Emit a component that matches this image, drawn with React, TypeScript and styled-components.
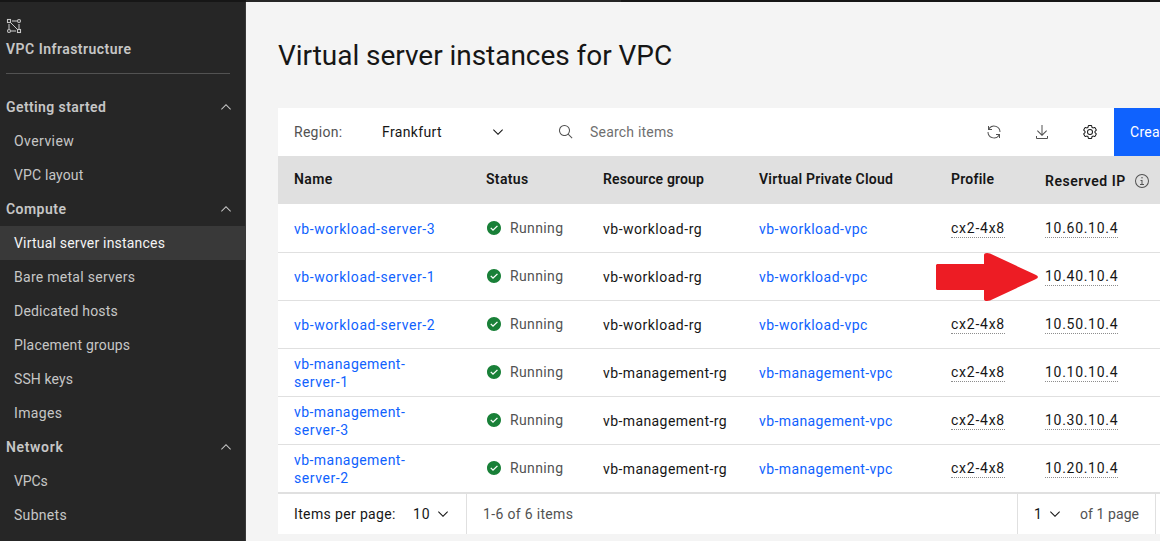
import React from 'react';
import styled, { createGlobalStyle, css } from 'styled-components';

const GlobalStyle = createGlobalStyle`
  *, *::before, *::after { box-sizing: border-box; }
  body {
    margin: 0;
    overflow: hidden;
    background: #f4f4f4;
    color: #161616;
    font: 400 14px/18px Roboto, "Liberation Sans", sans-serif;
  }
`;

const Page = styled.div`
  display: flex;
  flex-direction: column;
  width: 1160px;
  height: 541px;
  overflow: hidden;
`;

const TopBar = styled.div`
  display: flex;
  flex: none;
  height: 2px;
  background: #161616;
`;

const TopBarSearch = styled.div`
  width: 375px;
  margin-left: 246px;
  background: #262626;
`;

const Body = styled.div`
  display: flex;
  flex: 1;
  min-height: 0;
`;

const Sidebar = styled.nav`
  flex: none;
  width: 246px;
  padding-top: 16px;
  overflow: hidden;
  background: #262626;
  border-right: 1px solid #393939;
  color: #c6c6c6;
`;

const SidebarHeader = styled.div`
  display: flex;
  flex-direction: column;
  gap: 6px;
  height: 56px;
  margin: 0 15px 16px 6px;
  border-bottom: 1px solid #525252;
  font-weight: 600;
`;

const Text = styled.span<{ $track?: number }>`
  letter-spacing: ${p => p.$track ?? 0}px;
  white-space: nowrap;
`;

const NavSection = styled.div`
  display: flex;
  align-items: center;
  justify-content: space-between;
  height: 34px;
  padding: 0 11px 0 6px;
  font-weight: 600;
`;

const NavItem = styled.div<{ $active?: boolean }>`
  display: flex;
  align-items: center;
  height: 34px;
  padding-left: 14px;
  ${p => p.$active && css`
    background: #393939;
    color: #f4f4f4;
  `}
`;

const Main = styled.main`
  flex: 1;
  min-width: 0;
  padding: 36px 0 0 32px;
  overflow: hidden;
`;

const Title = styled.h1`
  margin: 0 0 34px;
  font-size: 28px;
  font-weight: 400;
  line-height: 36px;
  letter-spacing: -0.04px;
  white-space: nowrap;
`;

const Toolbar = styled.div`
  display: flex;
  height: 48px;
  background: #fff;
`;

const RegionSelect = styled.div`
  display: flex;
  align-items: center;
  width: 264px;
  padding: 0 36px 0 16px;
`;

const RegionLabel = styled.div`
  width: 88px;
  color: #525252;
`;

const RegionValue = styled.div`
  flex: 1;
`;

const SearchField = styled.div`
  display: flex;
  flex: 1;
  align-items: center;
  gap: 16px;
  padding-left: 16px;
  color: #6f6f6f;
`;

const IconButton = styled.div<{ $strong?: boolean }>`
  display: flex;
  align-items: center;
  justify-content: center;
  width: 48px;
  color: ${p => (p.$strong ? '#161616' : '#525252')};
`;

const CreateButton = styled.div`
  display: flex;
  align-items: center;
  width: 46px;
  padding-left: 16px;
  overflow: hidden;
  background: #0f62fe;
  color: #fff;
`;

const TableRow = styled.div<{ $divided?: boolean }>`
  display: grid;
  grid-template-columns: 192px 117px 156px 192px 94px 131px;
  height: 48px;
  background: #fff;
  ${p => p.$divided && css`box-shadow: inset 0 1px #e0e0e0;`}
`;

const HeaderRow = styled(TableRow)`
  background: #e0e0e0;
  font-weight: 600;
`;

const Cell = styled.div<{ $drop?: number; $muted?: boolean }>`
  display: flex;
  align-items: center;
  gap: 8px;
  min-width: 0;
  padding: ${p => p.$drop ?? 0}px 0 0 16px;
  color: ${p => (p.$muted ? '#525252' : 'inherit')};
`;

const HeaderCell = styled(Cell)`
  padding-bottom: 2px;
`;

const Link = styled.a`
  display: flex;
  flex-direction: column;
  color: #0f62fe;
`;

const Dotted = styled(Text)`
  height: 19px;
  margin-bottom: -1px;
  border-bottom: 1px dotted #8d8d8d;
`;

const Pagination = styled.div`
  display: flex;
  height: 42px;
  background: #fff;
  border-top: 2px solid #e0e0e0;
  color: #525252;
`;

const PageSize = styled.div`
  display: flex;
  align-items: center;
  width: 189px;
  padding: 0 15px 0 16px;
  border-right: 1px solid #e0e0e0;
  color: #161616;
`;

const PageSizeLabel = styled.div`
  width: 119px;
`;

const PageSizeValue = styled.div`
  flex: 1;
`;

const Range = styled.div`
  display: flex;
  flex: 1;
  align-items: center;
  padding-left: 16px;
`;

const PageSelect = styled.div`
  display: flex;
  align-items: center;
  width: 139px;
  padding-left: 16px;
  border: solid #e0e0e0;
  border-width: 0 1px;
  color: #161616;
`;

const PageNumber = styled.div`
  width: 13px;
`;

const PageCount = styled.div`
  padding-left: 17px;
  color: #525252;
`;

const PageEnd = styled.div`
  width: 4px;
`;

const Pointer = styled.svg`
  position: absolute;
  left: 936px;
  top: 253px;
`;

const Icon = styled.svg`
  display: block;
  flex: none;
  width: 16px;
  height: 16px;
  fill: currentColor;
`;

const ChevronUp = () => (
  <Icon viewBox="0 0 16 16"><path d="M8 5L13 10 12.3 10.7 8 6.4 3.7 10.7 3 10z" /></Icon>
);

const ChevronDown = () => (
  <Icon viewBox="0 0 16 16"><path d="M8 11L3 6 3.7 5.3 8 9.6 12.3 5.3 13 6z" /></Icon>
);

const SearchIcon = () => (
  <Icon viewBox="0 0 32 32" color="#525252">
    <path d="M29,27.5859l-7.5521-7.5521a11.0177,11.0177,0,1,0-1.4141,1.4141L27.5859,29ZM4,13a9,9,0,1,1,9,9A9.01,9.01,0,0,1,4,13Z" />
  </Icon>
);

const RefreshIcon = () => (
  <Icon viewBox="0 0 32 32">
    <path d="M12 10H6.78A11 11 0 0 1 27 16h2A13 13 0 0 0 6 7.68V4H4v8h8zM20 22h5.22A11 11 0 0 1 5 16H3a13 13 0 0 0 23 8.32V28h2V20H20z" />
  </Icon>
);

const DownloadIcon = () => (
  <Icon viewBox="0 0 32 32">
    <path d="M26,24v4H6V24H4v4a2,2,0,0,0,2,2H26a2,2,0,0,0,2-2V24Z" />
    <path d="M26 14 24.59 12.59 17 20.17 17 2 15 2 15 20.17 7.41 12.59 6 14 16 24 26 14z" />
  </Icon>
);

const SettingsIcon = () => (
  <Icon viewBox="0 0 32 32">
    <path d="M27,16.76c0-.25,0-.5,0-.76s0-.51,0-.77l1.92-1.68A2,2,0,0,0,29.3,11L26.94,7a2,2,0,0,0-1.73-1,2,2,0,0,0-.64.1l-2.43.82a11.35,11.35,0,0,0-1.31-.75l-.51-2.52a2,2,0,0,0-2-1.61H13.64a2,2,0,0,0-2,1.61l-.51,2.52a11.48,11.48,0,0,0-1.32.75L7.43,6.06A2,2,0,0,0,6.79,6,2,2,0,0,0,5.06,7L2.7,11a2,2,0,0,0,.41,2.51L5,15.24c0,.25,0,.5,0,.76s0,.51,0,.77L3.11,18.45A2,2,0,0,0,2.7,21L5.06,25a2,2,0,0,0,1.73,1,2,2,0,0,0,.64-.1l2.43-.82a11.35,11.35,0,0,0,1.31.75l.51,2.52a2,2,0,0,0,2,1.61h4.72a2,2,0,0,0,2-1.61l.51-2.52a11.48,11.48,0,0,0,1.32-.75l2.42.82a2,2,0,0,0,.64.1,2,2,0,0,0,1.73-1L29.3,21a2,2,0,0,0-.41-2.51ZM25.21,24l-3.43-1.16a8.86,8.86,0,0,1-2.71,1.57L18.36,28H13.64l-.71-3.55a9.36,9.36,0,0,1-2.7-1.57L6.79,24,4.43,20l2.72-2.4a8.9,8.9,0,0,1,0-3.13L4.43,12,6.79,8l3.43,1.16a8.86,8.86,0,0,1,2.71-1.57L13.64,4h4.72l.71,3.55a9.36,9.36,0,0,1,2.7,1.57L25.21,8,27.57,12l-2.72,2.4a8.9,8.9,0,0,1,0,3.13L27.57,20Z" />
    <path d="M16,22a6,6,0,1,1,6-6A5.94,5.94,0,0,1,16,22Zm0-10a3.91,3.91,0,0,0-4,4,3.91,3.91,0,0,0,4,4,3.91,3.91,0,0,0,4-4A3.91,3.91,0,0,0,16,12Z" />
  </Icon>
);

const InfoIcon = () => (
  <Icon viewBox="0 0 32 32" color="#525252">
    <path d="M17 22 17 14 13 14 13 16 15 16 15 22 12 22 12 24 20 24 20 22 17 22z" />
    <path d="M16,8a1.5,1.5,0,1,0,1.5,1.5A1.5,1.5,0,0,0,16,8Z" />
    <path d="M16,30A14,14,0,1,1,30,16,14,14,0,0,1,16,30ZM16,4A12,12,0,1,0,28,16,12,12,0,0,0,16,4Z" />
  </Icon>
);

const RunningIcon = () => (
  <Icon viewBox="0 0 16 16" color="#198038">
    <path d="M8,1C4.1,1,1,4.1,1,8c0,3.9,3.1,7,7,7s7-3.1,7-7C15,4.1,11.9,1,8,1z M7,11L4.3,8.3l0.9-0.8L7,9.3l4-3.9l0.9,0.8L7,11z" />
  </Icon>
);

const VpcIcon = () => (
  <Icon viewBox="0 0 16 16">
    <path d="M6 2h5v2H6zM12 6h2v5h-2zM2 6h2v5H2zM5 12h5v2H5z" fill="#7a7a7a" />
    <path d="M4.5 4.5l7 7" stroke="currentColor" />
    <g fill="#262626" stroke="currentColor" strokeWidth="1.1">
      <rect x="1.5" y="1.5" width="3" height="3" />
      <rect x="11.5" y="11.5" width="3" height="3" />
      <circle cx="13" cy="3" r="1.5" />
      <circle cx="3" cy="13" r="1.5" />
    </g>
  </Icon>
);

type Label = [text: string, track: number];

const sections: { head: Label; items: Label[] }[] = [
  { head: ['Getting started', 0.4], items: [['Overview', 0.44], ['VPC layout', 0.14]] },
  {
    head: ['Compute', 0.46],
    items: [
      ['Virtual server instances', 0.2],
      ['Bare metal servers', 0.28],
      ['Dedicated hosts', 0.2],
      ['Placement groups', 0.18],
      ['SSH keys', 0.1],
      ['Images', 0.36],
    ],
  },
  { head: ['Network', 0.66], items: [['VPCs', -0.15], ['Subnets', 0.3]] },
];

const workload = { group: ['vb-workload-rg', 0.5] as Label, vpc: ['vb-workload-vpc', 0.48] as Label };
const management = { group: ['vb-management-rg', 0.41] as Label, vpc: ['vb-management-vpc', 0.4] as Label };

const servers: { name: Label[]; group: Label; vpc: Label; profile?: string; ip: string }[] = [
  { name: [['vb-workload-server-3', 0.57]], ...workload, profile: 'cx2-4x8', ip: '10.60.10.4' },
  { name: [['vb-workload-server-1', 0.57]], ...workload, ip: '10.40.10.4' },
  { name: [['vb-workload-server-2', 0.57]], ...workload, profile: 'cx2-4x8', ip: '10.50.10.4' },
  { name: [['vb-management-', 0.45], ['server-1', 0.58]], ...management, profile: 'cx2-4x8', ip: '10.10.10.4' },
  { name: [['vb-management-', 0.45], ['server-3', 0.58]], ...management, profile: 'cx2-4x8', ip: '10.30.10.4' },
  { name: [['vb-management-', 0.45], ['server-2', 0.58]], ...management, profile: 'cx2-4x8', ip: '10.20.10.4' },
];

export default function App() {
  return (
    <Page>
      <GlobalStyle />
      <TopBar><TopBarSearch /></TopBar>
      <Body>
        <Sidebar>
          <SidebarHeader>
            <VpcIcon />
            <Text $track={0.48}>VPC Infrastructure</Text>
          </SidebarHeader>
          {sections.map(({ head, items }) => (
            <React.Fragment key={head[0]}>
              <NavSection><Text $track={head[1]}>{head[0]}</Text><ChevronUp /></NavSection>
              {items.map(([text, track]) => (
                <NavItem key={text} $active={text === 'Virtual server instances'}>
                  <Text $track={track}>{text}</Text>
                </NavItem>
              ))}
            </React.Fragment>
          ))}
        </Sidebar>
        <Main>
          <Title>Virtual server instances for VPC</Title>
          <Toolbar>
            <RegionSelect>
              <RegionLabel><Text $track={0.28}>Region:</Text></RegionLabel>
              <RegionValue><Text $track={0.36}>Frankfurt</Text></RegionValue>
              <ChevronDown />
            </RegionSelect>
            <SearchField><SearchIcon /><Text $track={0.2}>Search items</Text></SearchField>
            <IconButton><RefreshIcon /></IconButton>
            <IconButton><DownloadIcon /></IconButton>
            <IconButton $strong><SettingsIcon /></IconButton>
            <CreateButton><Text $track={0.3}>Create</Text></CreateButton>
          </Toolbar>
          <HeaderRow>
            <HeaderCell><Text $track={0.42}>Name</Text></HeaderCell>
            <HeaderCell><Text $track={0.32}>Status</Text></HeaderCell>
            <HeaderCell><Text $track={0.15}>Resource group</Text></HeaderCell>
            <HeaderCell><Text $track={0.22}>Virtual Private Cloud</Text></HeaderCell>
            <HeaderCell><Text $track={0.24}>Profile</Text></HeaderCell>
            <Cell $drop={2}><Text $track={0.51}>Reserved IP</Text><InfoIcon /></Cell>
          </HeaderRow>
          {servers.map(({ name, group, vpc, profile, ip }, i) => (
            <TableRow key={ip} $divided={i > 0}>
              <Cell $drop={2}>
                <Link>{name.map(([text, track]) => <Text key={text} $track={track}>{text}</Text>)}</Link>
              </Cell>
              <Cell $muted><RunningIcon /><Text $track={0.38}>Running</Text></Cell>
              <Cell $drop={2}><Text $track={group[1]}>{group[0]}</Text></Cell>
              <Cell $drop={2}><Link><Text $track={vpc[1]}>{vpc[0]}</Text></Link></Cell>
              <Cell>{profile && <Dotted $track={0.75}>{profile}</Dotted>}</Cell>
              <Cell><Dotted $track={0.71}>{ip}</Dotted></Cell>
            </TableRow>
          ))}
          <Pagination>
            <PageSize>
              <PageSizeLabel><Text $track={0.36}>Items per page:</Text></PageSizeLabel>
              <PageSizeValue><Text $track={0.8}>10</Text></PageSizeValue>
              <ChevronDown />
            </PageSize>
            <Range><Text $track={0.33}>1-6 of 6 items</Text></Range>
            <PageSelect>
              <PageNumber>1</PageNumber>
              <ChevronDown />
              <PageCount><Text $track={0.07}>of 1 page</Text></PageCount>
            </PageSelect>
            <PageEnd />
          </Pagination>
        </Main>
      </Body>
      <Pointer width="103" height="48" viewBox="0 0 103 48" fill="#ed1c24">
        <path d="M1 11H48V2Q48 0 51 0L54 .5 99 21.5Q105 24 99 26.5L54 47.5 51 48Q48 48 48 46V37H1L0 36V12Z" />
      </Pointer>
    </Page>
  );
}
